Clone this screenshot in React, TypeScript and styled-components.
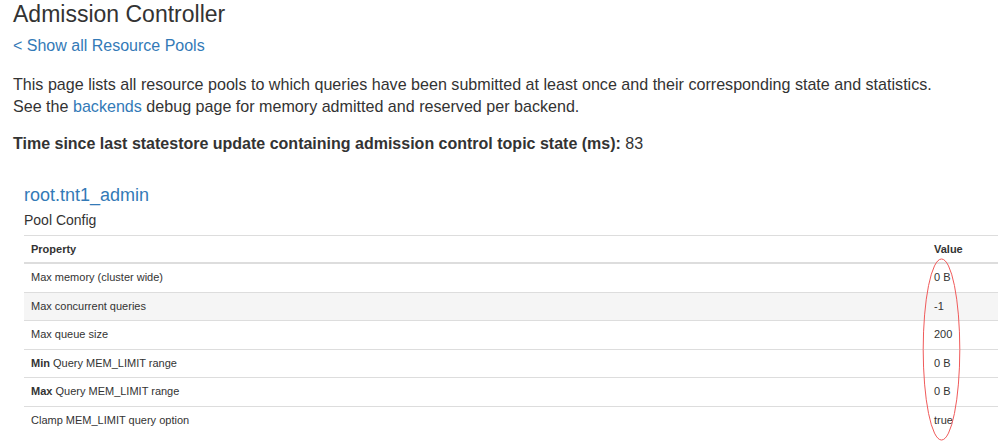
import styled, { createGlobalStyle } from 'styled-components';

const GlobalStyle = createGlobalStyle`
  html, body {
    margin: 0;
    padding: 0;
    background: #fff;
    overflow: hidden;
  }
  body {
    font-family: "Liberation Sans", Arial, sans-serif;
    color: #333;
  }
`;

const Page = styled.div`
  position: relative;
  width: 998px;
  height: 448px;
  padding: 2px 0 0 13px;
  box-sizing: border-box;
`;

const Title = styled.h2`
  margin: 0;
  font-size: 23px;
  line-height: 25px;
  font-weight: 400;
  color: #333;
`;

const BackLink = styled.a`
  display: block;
  margin-top: 8px;
  font-size: 16px;
  line-height: 22px;
  color: #337ab7;
  text-decoration: none;
`;

const Intro = styled.p`
  margin: 15.6px 0 0;
  font-size: 16.1px;
  line-height: 22.4px;
`;

const Link = styled.a`
  color: #337ab7;
  text-decoration: none;
`;

const StatLine = styled.p`
  margin: 15.2px 0 0;
  font-size: 16px;
  line-height: 22px;
  strong {
    font-weight: 700;
  }
`;

const Pool = styled.section`
  margin: 30.6px 0 0 11px;
`;

const PoolName = styled.h3`
  margin: 0;
  font-size: 18px;
  line-height: 20px;
  font-weight: 400;
  color: #337ab7;
`;

const PoolLabel = styled.h4`
  margin: 4.8px 0 0;
  font-size: 14px;
  line-height: 20px;
  font-weight: 400;
  color: #333;
`;

const Table = styled.table`
  margin-top: 5px;
  width: 974px;
  border-collapse: collapse;
  font-size: 11px;
  line-height: 15.5px;
  color: #333;
`;

const HeadCell = styled.th<{ $narrow?: boolean }>`
  text-align: left;
  font-weight: 700;
  padding: 6.5px 7px 4.5px;
  border-top: 1px solid #ddd;
  border-bottom: 2px solid #ddd;
  width: ${(p) => (p.$narrow ? '57px' : 'auto')};
`;

const Row = styled.tr<{ $shade?: boolean }>`
  background: ${(p) => (p.$shade ? '#f5f5f5' : 'transparent')};
`;

const Cell = styled.td<{ $last?: boolean }>`
  padding: 6px 7px;
  border-bottom: ${(p) => (p.$last ? '0' : '1px solid #ddd')};
  b {
    font-weight: 700;
  }
`;

const Marker = styled.svg`
  position: absolute;
  left: 920px;
  top: 256px;
  pointer-events: none;
`;

const rows: { label: React.ReactNode; value: string }[] = [
  { label: 'Max memory (cluster wide)', value: '0 B' },
  { label: 'Max concurrent queries', value: '-1' },
  { label: 'Max queue size', value: '200' },
  { label: <><b>Min</b> Query MEM_LIMIT range</>, value: '0 B' },
  { label: <><b>Max</b> Query MEM_LIMIT range</>, value: '0 B' },
  { label: 'Clamp MEM_LIMIT query option', value: 'true' },
];

const App = () => {
  return (
    <Page>
      <GlobalStyle />
      <Title>Admission Controller</Title>
      <BackLink href="#">&lt; Show all Resource Pools</BackLink>
      <Intro>
        This page lists all resource pools to which queries have been submitted at least once and their corresponding state and statistics.
        <br />
        See the <Link href="#">backends</Link> debug page for memory admitted and reserved per backend.
      </Intro>
      <StatLine>
        <strong>Time since last statestore update containing admission control topic state (ms):</strong> 83
      </StatLine>
      <Pool>
        <PoolName>root.tnt1_admin</PoolName>
        <PoolLabel>Pool Config</PoolLabel>
        <Table>
          <thead>
            <tr>
              <HeadCell>Property</HeadCell>
              <HeadCell $narrow>Value</HeadCell>
            </tr>
          </thead>
          <tbody>
            {rows.map((r, i) => {
              const last = i === rows.length - 1;
              return (
                <Row key={i} $shade={i === 1}>
                  <Cell $last={last}>{r.label}</Cell>
                  <Cell $last={last}>{r.value}</Cell>
                </Row>
              );
            })}
          </tbody>
        </Table>
      </Pool>
      <Marker width="44" height="190" viewBox="0 0 44 190">
        <ellipse cx="21.5" cy="93.5" rx="18.3" ry="90.5" fill="none" stroke="#f05a5a" strokeWidth="1" />
      </Marker>
    </Page>
  );
};

export default App;
